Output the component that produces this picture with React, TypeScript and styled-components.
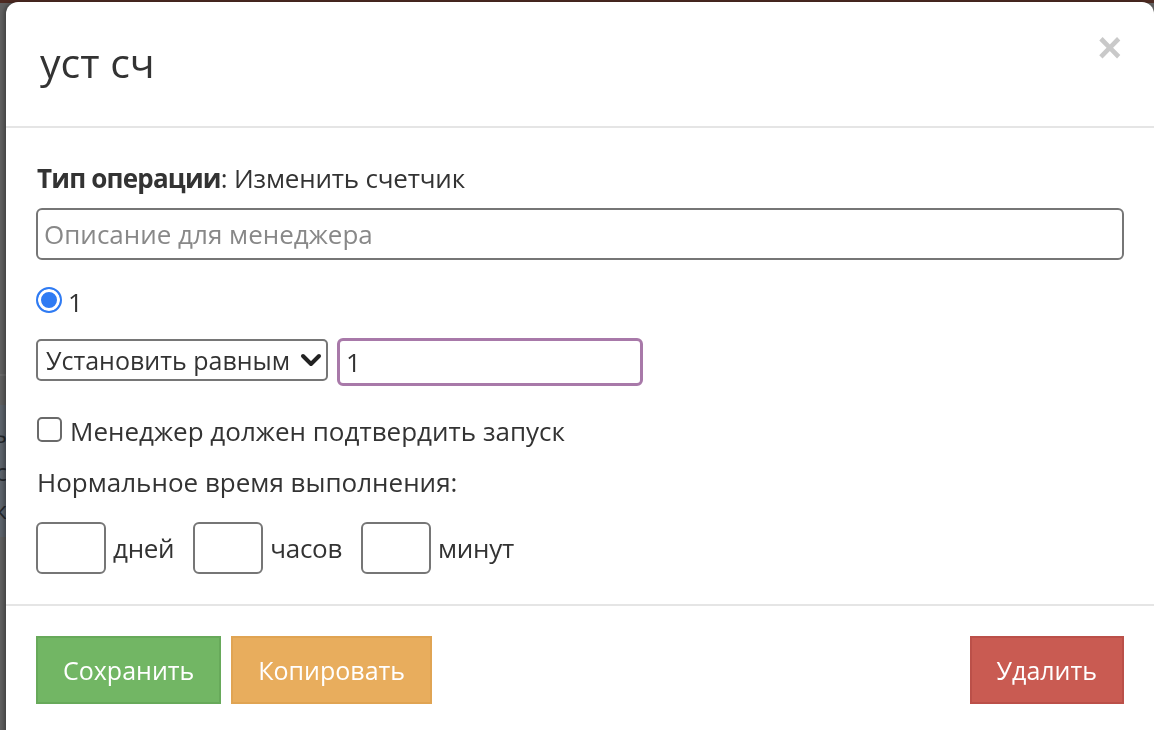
import { useState } from "react";
import styled, { createGlobalStyle } from "styled-components";

const palette = {
  text: "#333333",
  muted: "#888888",
  line: "#e5e5e5",
  border: "#767676",
  focus: "#a879a9",
  radio: "#2f7bf3",
  green: { bg: "#72b664", border: "#67a95a" },
  orange: { bg: "#e8ad5d", border: "#e0a453" },
  red: { bg: "#c95b52", border: "#bb5049" },
};

type Tone = "green" | "orange" | "red";

const GlobalStyle = createGlobalStyle`
  * {
    box-sizing: border-box;
  }
  html, body {
    margin: 0;
    padding: 0;
    overflow: hidden;
  }
  body {
    font-family: "Open Sans", "Noto Sans", sans-serif;
    color: ${palette.text};
  }
`;

function ChevronIcon() {
  return (
    <svg width="22" height="14" viewBox="0 0 22 14">
      <path
        d="M3 3 L11 11 L19 3"
        fill="none"
        stroke="#222"
        strokeWidth="4"
        strokeLinecap="round"
        strokeLinejoin="round"
      />
    </svg>
  );
}

function App() {
  const [counter, setCounter] = useState("1");

  return (
    <>
      <GlobalStyle />
      <Page>
        <TopBar />
        <PageDivider />
        <PeekPanel>
          <span>ь</span>
          <span>с</span>
          <span>к</span>
        </PeekPanel>
      </Page>
      <Modal>
        <Header>
          <Title>уст сч</Title>
          <CloseButton>×</CloseButton>
        </Header>
        <Body>
          <TypeLine>
            <b>Тип операции</b>: Изменить счетчик
          </TypeLine>
          <WideInput placeholder="Описание для менеджера" />
          <RadioRow>
            <Radio type="radio" defaultChecked name="counter" />
            <span>1</span>
          </RadioRow>
          <ActionRow>
            <SelectWrap>
              <Select defaultValue="eq">
                <option value="eq">Установить равным</option>
                <option value="inc">Увеличить на</option>
              </Select>
              <SelectArrow>
                <ChevronIcon />
              </SelectArrow>
            </SelectWrap>
            <ValueInput
              value={counter}
              onChange={(e) => setCounter(e.target.value)}
            />
          </ActionRow>
          <CheckRow>
            <Checkbox type="checkbox" />
            <span>Менеджер должен подтвердить запуск</span>
          </CheckRow>
          <Label>Нормальное время выполнения:</Label>
          <TimeRow>
            <TimeField>
              <SmallInput />
              <span>дней</span>
            </TimeField>
            <TimeField>
              <SmallInput />
              <span>часов</span>
            </TimeField>
            <TimeField>
              <SmallInput />
              <span>минут</span>
            </TimeField>
          </TimeRow>
        </Body>
        <Footer>
          <Button $tone="green">Сохранить</Button>
          <Button $tone="orange">Копировать</Button>
          <Spacer />
          <Button $tone="red">Удалить</Button>
        </Footer>
      </Modal>
    </>
  );
}

export default App;

const Page = styled.div`
  height: 100vh;
  background-color: #606060;
`;

const TopBar = styled.div`
  height: 3px;
  background-color: #4d2a22;
`;

const PageDivider = styled.div`
  margin-top: 371px;
  height: 2px;
  background-color: #6a6a6a;
`;

const PeekPanel = styled.div`
  display: flex;
  flex-direction: column;
  align-items: flex-end;
  margin-top: 29px;
  width: 40px;
  height: 132px;
  padding: 10px 33px 0 0;
  background-color: #5d646c;
  color: #25282c;
  font-size: 24px;
  line-height: 38px;
`;

const Modal = styled.div`
  position: fixed;
  top: 2px;
  left: 6px;
  width: 1148px;
  height: 760px;
  display: flex;
  flex-direction: column;
  background-color: #fff;
  border-radius: 12px;
  box-shadow: -2px 0 4px rgba(0, 0, 0, 0.35);
`;

const Header = styled.div`
  display: flex;
  align-items: flex-start;
  height: 126px;
  padding: 32px 32px 0 34px;
  border-bottom: 2px solid ${palette.line};
`;

const Title = styled.h4`
  flex: 1;
  margin: 0;
  font-size: 41px;
  font-weight: 400;
  line-height: 56px;
  color: ${palette.text};
`;

const CloseButton = styled.button`
  margin-top: -7px;
  padding: 0;
  border: 0;
  background: none;
  font-family: "Liberation Sans", Arial, sans-serif;
  font-size: 42px;
  font-weight: 700;
  line-height: 42px;
  color: #c9c9c9;
  cursor: pointer;
`;

const Body = styled.div`
  display: flex;
  flex-direction: column;
  padding: 32px 30px 30px;
  font-size: 26px;
  line-height: 36px;
  border-bottom: 2px solid ${palette.line};

  b {
    font-weight: 700;
    letter-spacing: -0.8px;
  }
`;

const TypeLine = styled.div`
  padding-left: 1px;
  letter-spacing: -0.2px;
`;

const fieldBorder = `
  border: 2px solid ${palette.border};
  border-radius: 6px;
  background-color: #fff;
  font-family: inherit;
  color: ${palette.text};
  outline: none;
`;

const WideInput = styled.input`
  ${fieldBorder}
  margin-top: 12px;
  width: 100%;
  height: 52px;
  padding: 0 6px;
  font-size: 26px;

  &::placeholder {
    color: ${palette.muted};
  }
`;

const RadioRow = styled.label`
  display: flex;
  align-items: center;
  gap: 6px;
  margin-top: 24px;
  height: 36px;
`;

const Radio = styled.input`
  appearance: none;
  margin: 0;
  width: 26px;
  height: 26px;
  border: 2px solid ${palette.radio};
  border-radius: 50%;
  background-color: ${palette.radio};
  box-shadow: inset 0 0 0 3px #fff;
  transform: translateY(-2px);
`;

const ActionRow = styled.div`
  display: flex;
  align-items: flex-start;
  gap: 9px;
  margin-top: 18px;
`;

const SelectWrap = styled.div`
  position: relative;
  margin-top: 1px;
`;

const Select = styled.select`
  ${fieldBorder}
  appearance: none;
  width: 292px;
  height: 42px;
  padding: 0 36px 0 8px;
  border-radius: 5px;
  font-size: 25px;
`;

const SelectArrow = styled.span`
  position: absolute;
  top: 14px;
  right: 6px;
  display: flex;
  pointer-events: none;
`;

const ValueInput = styled.input`
  ${fieldBorder}
  width: 306px;
  height: 48px;
  padding: 0 6px;
  border: 3px solid ${palette.focus};
  font-size: 26px;
`;

const CheckRow = styled.label`
  display: flex;
  align-items: center;
  gap: 8px;
  margin-top: 27px;
  height: 36px;
`;

const Checkbox = styled.input`
  appearance: none;
  margin: 0 0 0 1px;
  width: 25px;
  height: 25px;
  border: 2px solid #6a6a6a;
  border-radius: 5px;
  background-color: #fff;
  transform: translateY(-2px);
`;

const Label = styled.div`
  margin-top: 15px;
  padding-left: 1px;
`;

const TimeRow = styled.div`
  display: flex;
  gap: 19px;
  margin-top: 22px;
`;

const TimeField = styled.label`
  display: flex;
  align-items: center;
  gap: 7px;
  letter-spacing: -0.3px;
`;

const SmallInput = styled.input`
  ${fieldBorder}
  width: 70px;
  height: 52px;
  padding: 0 6px;
  font-size: 26px;
`;

const Footer = styled.div`
  display: flex;
  align-items: flex-start;
  gap: 10px;
  padding: 30px 30px;
`;

const Spacer = styled.div`
  flex: 1;
`;

const Button = styled.button<{ $tone: Tone }>`
  height: 68px;
  padding: 0 25px;
  border: 2px solid ${({ $tone }) => palette[$tone].border};
  border-radius: 0;
  background-color: ${({ $tone }) => palette[$tone].bg};
  color: #fff;
  font-family: inherit;
  font-size: 25px;
  cursor: pointer;
`;
